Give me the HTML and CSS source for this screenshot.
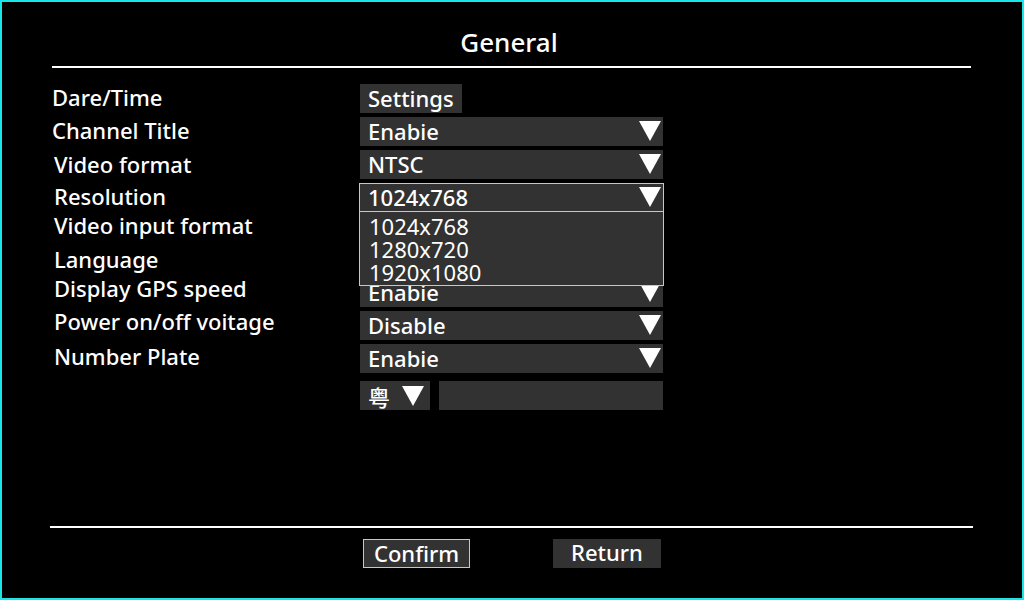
FILE: index.html
```html
<!DOCTYPE html>
<html>
<head>
  <link rel="stylesheet" href="styles.css">
</head>
<body>
  <div class="screen">
    <div class="title">General</div>
    <div class="rule top"></div>

    <div class="form">
      <div class="row">
        <div class="label">Dare/Time</div>
        <div class="button">Settings</div>
      </div>
      <div class="row">
        <div class="label">Channel Title</div>
        <div class="select"><span>Enabie</span><svg class="arrow" viewBox="0 0 22 20"><polygon points="0,0 22,0 11,20" /></svg></div>
      </div>
      <div class="row">
        <div class="label shift low">Video format</div>
        <div class="select"><span>NTSC</span><svg class="arrow" viewBox="0 0 22 20"><polygon points="0,0 22,0 11,20" /></svg></div>
      </div>
      <div class="row">
        <div class="label shift">Resolution</div>
        <div class="select open">
          <span>1024x768</span><svg class="arrow" viewBox="0 0 22 20"><polygon points="0,0 22,0 11,20" /></svg>
          <ul class="options">
            <li>1024x768</li>
            <li>1280x720</li>
            <li>1920x1080</li>
          </ul>
        </div>
      </div>
      <!-- the next two selects sit under the open list -->
      <div class="row">
        <div class="label shift top">Video input format</div>
        <div class="select"></div>
      </div>
      <div class="row">
        <div class="label shift high">Language</div>
        <div class="select"></div>
      </div>
      <div class="row gps">
        <div class="label shift high">Display GPS speed</div>
        <div class="select"><span>Enabie</span><svg class="arrow" viewBox="0 0 22 20"><polygon points="0,0 22,0 11,20" /></svg></div>
      </div>
      <div class="row">
        <div class="label shift high">Power on/off voitage</div>
        <div class="select"><span>Disable</span><svg class="arrow" viewBox="0 0 22 20"><polygon points="0,0 22,0 11,20" /></svg></div>
      </div>
      <div class="row">
        <div class="label shift mid">Number Plate</div>
        <div class="select"><span>Enabie</span><svg class="arrow" viewBox="0 0 22 20"><polygon points="0,0 22,0 11,20" /></svg></div>
      </div>
      <div class="row plate">
        <div class="label"></div>
        <div class="province"><span>粤</span><svg class="arrow" viewBox="0 0 22 20"><polygon points="0,0 22,0 11,20" /></svg></div>
        <div class="plate-input"></div>
      </div>
    </div>

    <div class="rule bottom"></div>
    <div class="actions">
      <div class="button wide focus">Confirm</div>
      <div class="button wide">Return</div>
    </div>
  </div>
</body>
</html>
```

FILE: styles.css
```css
body {
  margin: 0;
  background: #000;
  font-family: 'Noto Sans', 'Noto Sans CJK SC', sans-serif;
  color: #fff;
}

.screen {
  width: 1024px;
  height: 600px;
  box-sizing: border-box;
  border: 2px solid #19e6e6;
  display: flex;
  flex-direction: column;
}

.title {
  text-align: center;
  font-size: 26px;
  font-weight: 500;
  line-height: 34px;
  margin-top: 23px;
  padding-right: 6px;
}

.rule {
  height: 2px;
  background: #fff;
}

.rule.top {
  margin: 7px 51px 0 50px;
}

.rule.bottom {
  margin: 0 49px 0 48px;
}

.form {
  flex: 1;
  display: flex;
  flex-direction: column;
  gap: 4px;
  padding: 16px 0 0 50px;
}

.row {
  display: flex;
  align-items: center;
  height: 29px;
  font-size: 22px;
  font-weight: 500;
}

.row.gps {
  margin-top: -4px;
}

.row.plate {
  margin-top: 4px;
}

/* labels don't sit quite centred on their controls */
.label {
  width: 308px;
  white-space: nowrap;
  margin-top: -4px;
}

.label.shift {
  padding-left: 2px;
  width: 306px;
}

.label.low {
  margin-top: -2px;
}

.label.mid {
  margin-top: -6px;
}

.label.high {
  margin-top: -10px;
}

.label.top {
  margin-top: -12px;
}

.button {
  background: #323232;
  height: 29px;
  line-height: 28px;
  padding: 0 8px;
  box-sizing: border-box;
}

.select {
  position: relative;
  width: 303px;
  height: 29px;
  background: #323232;
  display: flex;
  align-items: center;
  justify-content: space-between;
  padding: 0 2px 1px 8px;
  box-sizing: border-box;
}

.arrow {
  width: 22px;
  height: 20px;
  fill: #fff;
}

.select.open {
  border: 1px solid #ddd44a;
  width: 305px;
  margin-left: -1px;
  padding-left: 8px;
}

.options {
  position: absolute;
  top: 27px;
  left: -1px;
  width: 305px;
  height: 75px;
  box-sizing: border-box;
  margin: 0;
  padding: 3px 0 0 9px;
  list-style: none;
  background: #323232;
  border: 1px solid #ddd44a;
  font-size: 22px;
  font-weight: 400;
  line-height: 23px;
  z-index: 10;
}

.province {
  width: 70px;
  height: 29px;
  background: #323232;
  display: flex;
  align-items: center;
  gap: 12px;
  padding-left: 8px;
  box-sizing: border-box;
}

.plate-input {
  width: 224px;
  height: 29px;
  background: #323232;
  margin-left: 9px;
}

.actions {
  display: flex;
  gap: 83px;
  padding: 11px 0 30px 361px;
  font-size: 22px;
  font-weight: 500;
}

.button.wide {
  width: 108px;
  text-align: center;
  line-height: 26px;
}

.button.focus {
  border: 1px solid #ddd44a;
  width: 107px;
}
```
